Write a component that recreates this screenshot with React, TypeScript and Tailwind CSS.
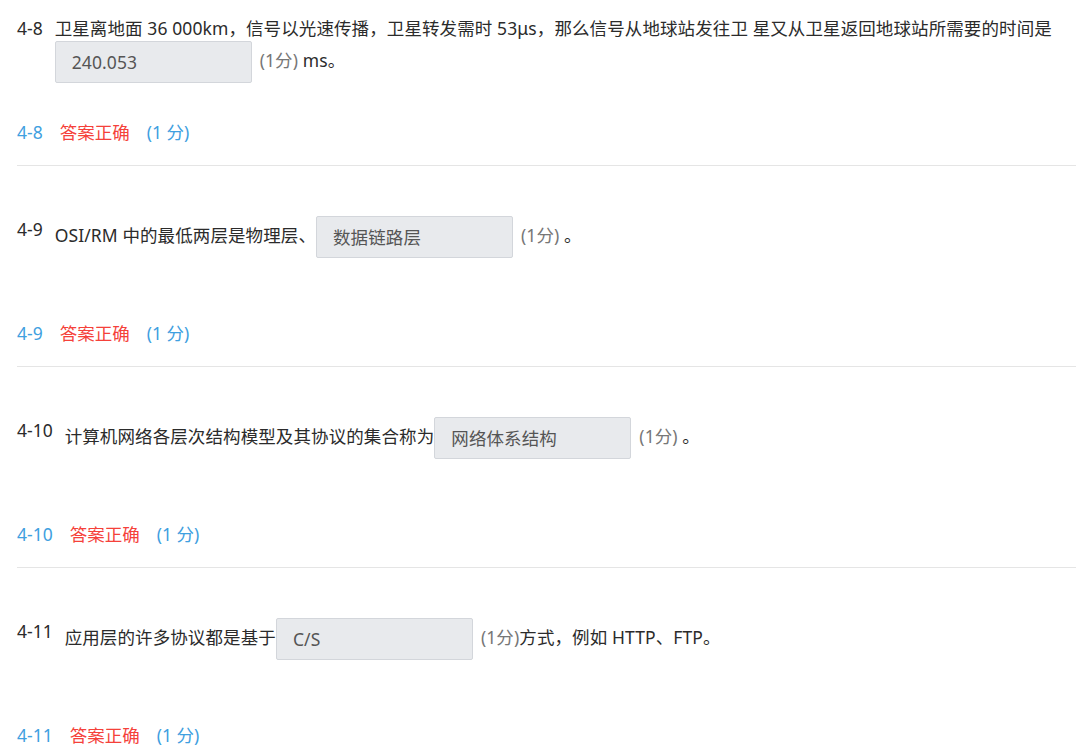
const questions = [
  {
    id: "4-8",
    before:
      "卫星离地面 36 000km，信号以光速传播，卫星转发需时 53μs，那么信号从地球站发往卫 星又从卫星返回地球站所需要的时间是",
    answer: "240.053",
    after: " ms。",
    first: true,
  },
  {
    id: "4-9",
    before: "OSI/RM 中的最低两层是物理层、",
    answer: "数据链路层",
    after: " 。",
  },
  {
    id: "4-10",
    before: "计算机网络各层次结构模型及其协议的集合称为",
    answer: "网络体系结构",
    after: " 。",
  },
  {
    id: "4-11",
    before: "应用层的许多协议都是基于",
    answer: "C/S",
    after: "方式，例如 HTTP、FTP。",
  },
];

const QuestionBlock = ({ q }: { q: (typeof questions)[number] }) => {
  return (
    <section
      className={`border-b border-[#e5e5e5] pb-[20px] ${q.first ? "pt-[15px]" : "pt-[50px]"}`}
    >
      {/* Question */}
      <div className="flex items-start min-h-[104px]">
        <span className="shrink-0 leading-[26px] mr-[12px] text-[#2b2b2b]">{q.id}</span>
        <div className="leading-[26px] text-[#2b2b2b] tracking-[0.1px]">
          {q.before}
          <span className="inline-block align-middle w-[197px] h-[42px] pl-[16px] leading-[40px] bg-[#e8eaed] border border-[#d3d6db] rounded-[2px] text-[#555]">
            {q.answer}
          </span>
          <span className="ml-[8px] text-[#777]">(1分)</span>
          {q.after}
        </div>
      </div>

      {/* Result */}
      <div className="flex leading-[26px]">
        <span className="text-[#3fa0e0]">{q.id}</span>
        <span className="ml-[17px] text-[#f5413a]">答案正确</span>
        <span className="ml-[17px] text-[#3fa0e0]">(1 分)</span>
      </div>
    </section>
  );
};

export default function App() {
  return (
    <main
      className="min-h-screen bg-white pl-[17px] text-[17.5px]"
      style={{ fontFamily: '"Noto Sans", "Noto Sans CJK SC", sans-serif' }}
    >
      {questions.map((q) => (
        <QuestionBlock key={q.id} q={q} />
      ))}
    </main>
  );
}
